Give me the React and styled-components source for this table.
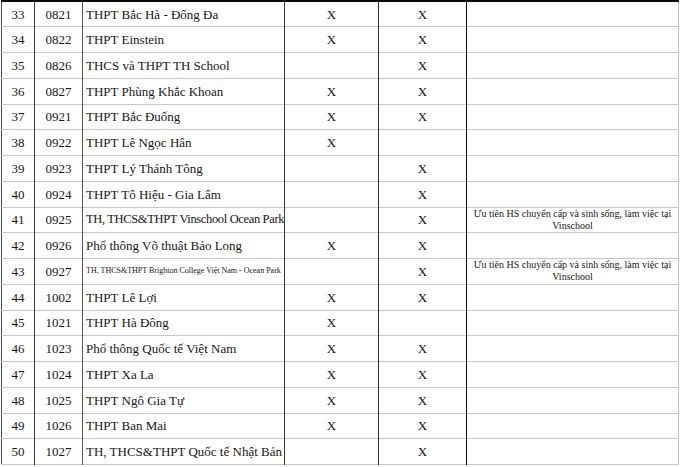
import React from "react";
import styled, { createGlobalStyle } from "styled-components";

const GlobalStyle = createGlobalStyle`
  html, body {
    margin: 0;
    padding: 0;
    background: #ffffff;
  }
  body {
    font-family: "Liberation Serif", "Times New Roman", serif;
    color: #161616;
  }
`;

const Wrapper = styled.div`
  width: 681px;
  height: 467px;
  overflow: hidden;
  padding-left: 1px;
  box-sizing: border-box;
`;

const Table = styled.table`
  width: 677px;
  table-layout: fixed;
  border-collapse: collapse;
  border-top: 2px solid #0a0a0a;
  border-left: 1px solid #4a4a4a;
  border-right: 1px solid #c4c4c4;
`;

const Row = styled.tr`
  height: 25.76px;
  border-bottom: 1px solid #c6c6c6;
`;

const Cell = styled.td`
  padding: ${(p) => (p.$align === "left" ? "0 0 0 3px" : "0 2px")};
  font-size: ${(p) => p.$size || 13}px;
  line-height: ${(p) => (p.$size && p.$size < 11 ? "12px" : "15px")};
  letter-spacing: ${(p) => (p.$tight ? "-0.35px" : "normal")};
  text-align: ${(p) => p.$align || "center"};
  vertical-align: middle;
  border-right: 1px solid ${(p) => p.$line || "#3a3a3a"};
  white-space: ${(p) => (p.$wrap ? "normal" : "nowrap")};
  overflow: hidden;
  box-sizing: border-box;
  &:last-child {
    border-right: none;
  }
`;

const Col = styled.col`
  width: ${(p) => p.$w}px;
`;

const NOTE = "Ưu tiên HS chuyển cấp và sinh sống, làm việc tại Vinschool";

const rows = [
  [33, "0821", "THPT Bắc Hà - Đống Đa", true, true],
  [34, "0822", "THPT Einstein", true, true],
  [35, "0826", "THCS và THPT TH School", false, true],
  [36, "0827", "THPT Phùng Khắc Khoan", true, true],
  [37, "0921", "THPT Bắc Đuống", true, true],
  [38, "0922", "THPT Lê Ngọc Hân", true, false],
  [39, "0923", "THPT Lý Thánh Tông", false, true],
  [40, "0924", "THPT Tô Hiệu - Gia Lâm", false, true],
  [41, "0925", "TH, THCS&THPT Vinschool Ocean Park", false, true, NOTE, 12.5, true],
  [42, "0926", "Phổ thông Võ thuật Bảo Long", true, true],
  [43, "0927", "TH, THCS&THPT Brighton College Việt Nam - Ocean Park", false, true, NOTE, 8],
  [44, "1002", "THPT Lê Lợi", true, true],
  [45, "1021", "THPT Hà Đông", true, false],
  [46, "1023", "Phổ thông Quốc tế Việt Nam", true, true],
  [47, "1024", "THPT Xa La", true, true],
  [48, "1025", "THPT Ngô Gia Tự", true, true],
  [49, "1026", "THPT Ban Mai", true, true],
  [50, "1027", "TH, THCS&THPT Quốc tế Nhật Bản", false, true],
];

export default function App() {
  return (
    <Wrapper>
      <GlobalStyle />
      <Table>
        <colgroup>
          <Col $w={33} />
          <Col $w={48} />
          <Col $w={202} />
          <Col $w={94} />
          <Col $w={88} />
          <Col $w={212} />
        </colgroup>
        <tbody>
          {rows.map(([stt, code, name, a, b, note, small, tight]) => (
            <Row key={stt}>
              <Cell $line="#3a3a3a">{stt}</Cell>
              <Cell $line="#555">{code}</Cell>
              <Cell $align="left" $size={small} $tight={tight}>
                {name}
              </Cell>
              <Cell $line="#2a2a2a">{a ? "X" : ""}</Cell>
              <Cell $line="#0a0a0a">{b ? "X" : ""}</Cell>
              <Cell $size={10} $wrap>
                {note || ""}
              </Cell>
            </Row>
          ))}
        </tbody>
      </Table>
    </Wrapper>
  );
}
